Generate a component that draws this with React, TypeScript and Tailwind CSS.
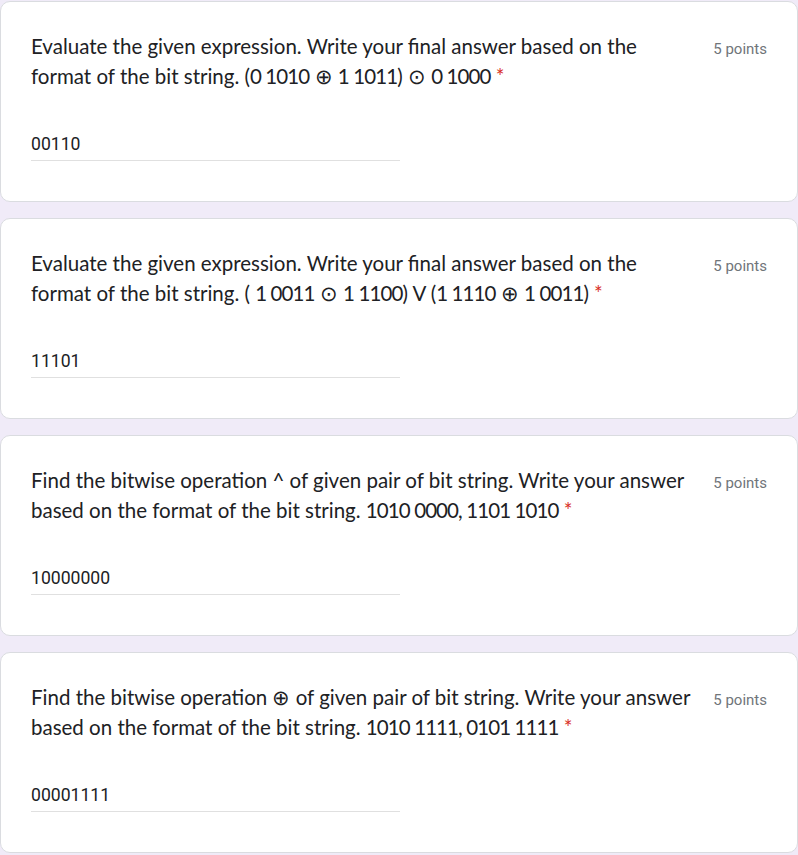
import React from "react";

type Q = { lines: string[]; answer: string };

const questions: Q[] = [
  {
    lines: [
      "Evaluate the given expression. Write your final answer based on the",
      "format of the bit string. (0 1010 \u2295 1 1011) \u2299 0 1000",
    ],
    answer: "00110",
  },
  {
    lines: [
      "Evaluate the given expression. Write your final answer based on the",
      "format of the bit string. ( 1 0011 \u2299 1 1100) V (1 1110 \u2295 1 0011)",
    ],
    answer: "11101",
  },
  {
    lines: [
      "Find the bitwise operation ^ of given pair of bit string. Write your answer",
      "based on the format of the bit string. 1010 0000, 1101 1010",
    ],
    answer: "10000000",
  },
  {
    lines: [
      "Find the bitwise operation \u2295 of given pair of bit string. Write your answer",
      "based on the format of the bit string. 1010 1111, 0101 1111",
    ],
    answer: "00001111",
  },
];

function Digits({ text }: { text: string }) {
  const parts = text.split(/([0-9][0-9 ,]*[0-9]|[0-9])/);
  return (
    <>
      {parts.map((p, i) =>
        i % 2 === 1 ? (
          <span key={i} className="tracking-[-0.9px]">
            {p}
          </span>
        ) : (
          <span key={i}>{p}</span>
        )
      )}
    </>
  );
}

function Card({ q }: { q: Q }) {
  return (
    <div className="rounded-[10px] border border-[#dadce0] bg-white px-[30px] pt-[29px] pb-[40px]">
      <div className="flex justify-between">
        <div className="text-[20.5px] leading-[30px] text-[#202124] font-['Lato','Noto_Sans',sans-serif]">
          <div className="whitespace-nowrap">{q.lines[0]}</div>
          <div className="whitespace-nowrap">
            <Digits text={q.lines[1]} />
            <span className="text-[#d93025]"> *</span>
          </div>
        </div>
        <div className="mt-[8px] shrink-0 text-[15px] leading-[20px] text-[#70757a] font-['Roboto',sans-serif]">
          5 points
        </div>
      </div>
      <div className="mt-[41px] w-[369px] border-b border-[#e0e0e0] pb-[4px] text-[17.6px] leading-[24px] text-[#202124] font-['Roboto',sans-serif]">
        {q.answer}
      </div>
    </div>
  );
}

export default function App() {
  return (
    <div className="min-h-screen bg-[#f0ebf8] pt-[1px] flex flex-col gap-[16px]">
      {questions.map((q, i) => (
        <Card key={i} q={q} />
      ))}
    </div>
  );
}
